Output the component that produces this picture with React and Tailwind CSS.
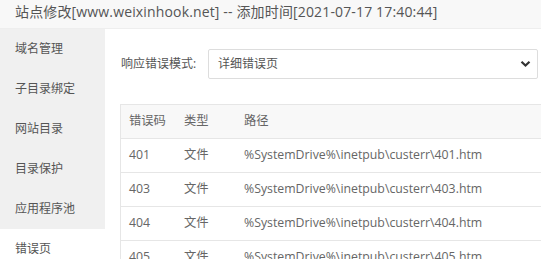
import React from "react";

const menu = ["域名管理", "子目录绑定", "网站目录", "目录保护", "应用程序池", "错误页"];
const rows = ["401", "403", "404", "405"];

export default function App() {
  return (
    <div className="w-[541px] h-[259px] overflow-hidden bg-white text-[#555] font-['Open_Sans','Noto_Sans_CJK_SC',sans-serif]">
      <div className="h-[29px] bg-[#f8f8f8] border-b border-[#eeeeee] pl-[15px] text-[14px] leading-[23px] tracking-[0.15px] text-[#555] whitespace-nowrap">
        站点修改[www.weixinhook.net] -- 添加时间[2021-07-17 17:40:44]
      </div>
      <div className="flex h-[230px]">
        <div className="w-[105px] shrink-0 bg-[#f0f0f0]">
          {menu.map((m, i) => (
            <div
              key={m}
              className={
                "h-[40px] leading-[40px] pl-[15px] text-[12px] text-[#555] " +
                (i === 5 ? "bg-white" : "")
              }
            >
              {m}
            </div>
          ))}
        </div>
        <div className="flex-1 pl-[15px] pt-[20px] min-w-0">
          <div className="flex items-center h-[30px]">
            <div className="w-[88px] pl-[1px] text-[12px] text-[#555] whitespace-nowrap">响应错误模式:</div>
            <div className="w-[330px] h-[30px] border border-[#dddddd] rounded-[2px] flex items-center justify-between pl-[9px] pr-[6px] text-[12px] text-[#555]">
              <span>详细错误页</span>
              <svg width="11" height="8" viewBox="0 0 11 8">
                <path d="M1.5 1.8 L5.5 5.6 L9.5 1.8" fill="none" stroke="#333" strokeWidth="2.2" />
              </svg>
            </div>
          </div>
          <div className="mt-[25px] w-[440px] border-t border-l border-[#e6e6e6] text-[12.3px] text-[#666]">
            <div className="flex h-[34px] items-center bg-[#f8f8f8] border-b border-[#e6e6e6]">
              <div className="w-[54px] pl-[8px]">错误码</div>
              <div className="w-[60px] pl-[9px]">类型</div>
              <div className="flex-1 pl-[9px]">路径</div>
            </div>
            {rows.map((r) => (
              <div key={r} className="flex h-[34px] items-center border-b border-[#e6e6e6] whitespace-nowrap">
                <div className="w-[54px] pl-[8px]">{r}</div>
                <div className="w-[60px] pl-[9px]">文件</div>
                <div className="flex-1 pl-[9px]">%SystemDrive%\inetpub\custerr\{r}.htm</div>
              </div>
            ))}
          </div>
        </div>
      </div>
    </div>
  );
}
